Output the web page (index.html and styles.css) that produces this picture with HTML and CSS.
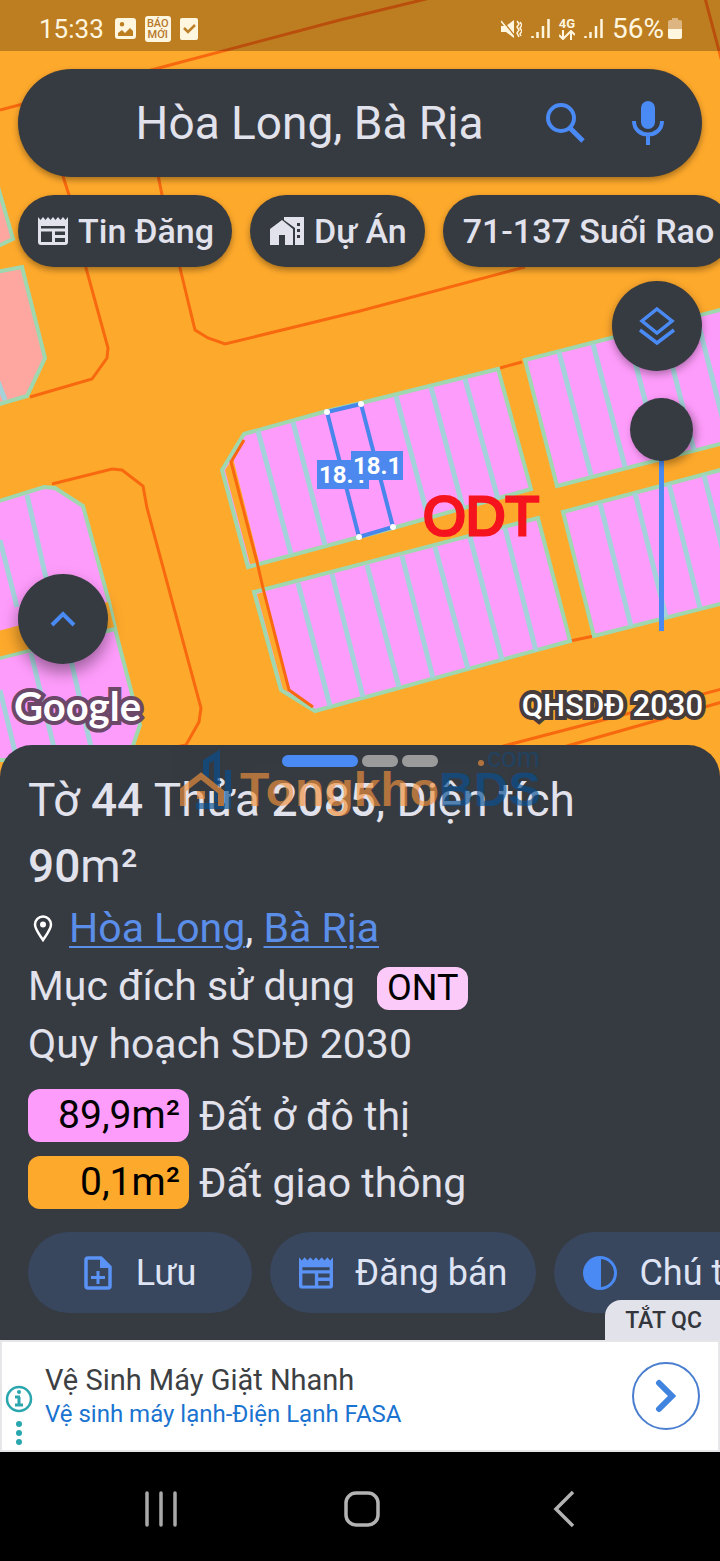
FILE: index.html
```html
<!DOCTYPE html>
<html lang="vi">
<head>
    <meta charset="UTF-8">
    <meta name="viewport" content="width=device-width, initial-scale=1.0">
    <title>Hòa Long, Bà Rịa</title>
    <link rel="stylesheet" href="styles.css">
</head>
<body>
    <main class="map">
        <svg class="map-canvas" viewBox="0 0 720 780" preserveAspectRatio="xMidYMin slice" aria-hidden="true">
            <rect width="720" height="780" fill="#fda92c"/>
            <!-- road edges -->
            <g class="road">
                <path d="M0 110L155 69L340 20L430 -2"/>
                <path d="M705 -2L722 62"/>
                <path d="M61 170L69 195L86 268L108 348L107 358L92 379L30 397"/>
                <path d="M157 170L162 195L180 268L195 330L208 338L225 344L360 311L525 267"/>
                <path d="M52 484L112 469L122 470L143 486L147 508L201 708L199 722L186 745L160 750"/>
                <path d="M500 368L522 362M570 641L594 636"/>
                <path d="M500 747L722 689M560 748L722 702"/>
            </g>
            <!-- blocks -->
            <g class="block salmon">
                <path d="M-4 180L13 239L-4 247Z"/>
                <path d="M-4 272L22 267L45 358L27 396L-4 405Z"/>
            </g>
            <g class="block">
                <path d="M-4 502L44 487L55 488L83 506L109 602L115 628L-4 656L-4 630Z"/>
                <path d="M-4 659L115 629L140 725L128 760L-4 760Z"/>
                <path d="M244 434L327 411L361 403L498 369L531 489L393 528L248 567L222 470Z"/>
                <path d="M254 592L538 518L570 641L315 711L281 690Z"/>
                <path d="M525 360L724 309V443L557 486Z"/>
                <path d="M563 512L724 469V603L594 636Z"/>
            </g>
            <path fill="#fda92c" d="M-2 631L108 602L114 627L-2 657Z"/>
            <path fill="#fda92c" d="M225 470L233 458L259 562L250 564Z"/>
            <path fill="#fda92c" d="M257 594L264 592L288 692L283 689Z"/>
            <!-- lot lines -->
            <g class="lots">
                <path d="M27 495L46 578M0 540L17 607M-2 382L5 400"/>
                <path d="M0 690L17 760M31 653L57 760M67 643L94 760"/>
                <path d="M258 431L291 554M293 422L325 545M396 396L428 517M431 387L463 508M465 379L498 499"/>
                <path d="M298 583L330 706M332 574L363 697M367 565L399 687M402 556L433 678M435 547L468 669M470 537L502 660M505 528L536 651"/>
                <path d="M559 352L591 475M593 344L625 467M628 335L660 458M662 326L694 450M697 318L728 440"/>
                <path d="M600 503L631 626M635 493L666 617M669 484L700 608M704 475L735 599"/>
            </g>
            <path class="edge" d="M244 440L231 462L257 562L263 588L289 690L313 707"/>
            <text class="zone" x="423" y="535">ODT</text>
            <!-- selected parcel -->
            <path d="M327 412L361 404L393 527L359 537Z" fill="none" stroke="#4886ec" stroke-width="4"/>
            <g fill="#fff">
                <circle cx="327" cy="412" r="3"/>
                <circle cx="361" cy="404" r="3"/>
                <circle cx="393" cy="527" r="3"/>
                <circle cx="359" cy="537" r="3"/>
            </g>
            <rect x="317" y="460" width="52" height="29" fill="#4c88ee"/>
            <text class="length" x="319" y="483">18.1</text>
            <rect x="351" y="451" width="52" height="29" fill="#4c88ee"/>
            <text class="length" x="353" y="474">18.1</text>
        </svg>

        <div class="map-ui">
            <div class="status-bar">
                <span class="clock">15:33</span>
                <svg width="21" height="21" viewBox="0 0 21 21"><path fill="#fff6e0" fill-rule="evenodd" d="M3 0H18Q21 0 21 3V18Q21 21 18 21H3Q0 21 0 18V3Q0 0 3 0ZM3 18H18V13L15 10L10 15L7 12L3 15ZM7 4A2.200 2.200 0 1 0 7 8.500A2.200 2.200 0 1 0 7 4Z"/></svg>
                <span class="news-badge">BÁO<br>MỚI</span>
                <svg width="18" height="22" viewBox="0 0 18 22"><rect width="18" height="22" rx="2" fill="#fff6e0"/><path d="M4 10L8 14L15 7" fill="none" stroke="#bd7f28" stroke-width="2.500"/></svg>
                <span class="status-space"></span>
                <svg width="21" height="20" viewBox="0 0 21 20"><path fill="#fff6e0" d="M0 7H5L13 1V19L5 13H0Z"/><path d="M1 1L13 16" stroke="#bd7f28" stroke-width="1.500"/><path d="M0 2L12 17M16 2L18 5L16 8L18 11L16 14L18 18M19 3L21 6L19 9L21 12L19 15L20 17" fill="none" stroke="#fff6e0" stroke-width="1.500"/></svg>
                <svg width="19" height="20" viewBox="0 0 19 20"><path d="M1.500 17V19M6.500 13V19M12 7V19M17.500 0V19" stroke="#fff6e0" stroke-width="2.500"/></svg>
                <span class="network">4G
                    <svg width="16" height="10" viewBox="0 0 16 10"><path d="M4 0V9M0 5L4 9L8 5M12 10V1M8 5L12 1L16 5" fill="none" stroke="#fff6e0" stroke-width="2"/></svg>
                </span>
                <svg width="19" height="20" viewBox="0 0 19 20"><path d="M1.500 17V19M6.500 13V19M12 7V19M17.500 0V19" stroke="#fff6e0" stroke-width="2.500"/></svg>
                <span class="battery">56%
                    <svg width="14" height="21" viewBox="0 0 14 21"><path fill="#dcb581" d="M4 0H10V2H12Q14 2 14 4V11H0V4Q0 2 2 2H4Z"/><path fill="#fff6e0" d="M0 11H14V19Q14 21 12 21H2Q0 21 0 19Z"/></svg>
                </span>
            </div>

            <form class="search">
                <input type="search" aria-label="Tìm kiếm" value="Hòa Long, Bà Rịa">
                <button type="button" aria-label="Tìm">
                    <svg width="42" height="42" viewBox="0 0 42 42" fill="none" stroke="#4a8af5" stroke-width="4"><circle cx="16" cy="16" r="13"/><path d="M25 26L38 39" stroke-width="5"/></svg>
                </button>
                <button type="button" aria-label="Giọng nói">
                    <svg width="34" height="44" viewBox="0 0 34 44"><rect x="10" y="0" width="14" height="28" rx="7" fill="#4a8af5"/><path d="M3 20C3 38 31 38 31 20M17 34V44" fill="none" stroke="#4a8af5" stroke-width="4"/></svg>
                </button>
            </form>

            <nav class="chips">
                <button type="button" class="chip">
                    <svg width="30" height="28" viewBox="0 0 30 28"><use href="#news"/></svg>Tin Đăng
                </button>
                <button type="button" class="chip">
                    <svg width="34" height="28" viewBox="0 0 34 28" fill="#e1e2ec"><path d="M0 12L12 3L23 12V28H15V18H9V28H0Z"/><path fill-rule="evenodd" d="M14 0H34V28H25V11L14 3ZM27 6V9H30V6ZM27 12V15H30V12ZM27 18V21H30V18Z"/></svg>Dự Án
                </button>
                <button type="button" class="chip">71-137 Suối Rao</button>
            </nav>

            <div class="tools">
                <button type="button" class="fab fab-up" aria-label="Mở rộng">
                    <svg width="26" height="16" viewBox="0 0 26 16"><path d="M2 14L13 3L24 14" fill="none" stroke="#4a8af5" stroke-width="4"/></svg>
                </button>
                <div class="tools-right">
                    <button type="button" class="fab" aria-label="Lớp bản đồ">
                        <svg width="38" height="40" viewBox="0 0 38 40" fill="none" stroke="#4a8af5" stroke-width="3.500"><path d="M19 3L34 15L19 27L4 15Z"/><path d="M2 24L19 37L36 24"/></svg>
                    </button>
                    <input type="range" class="opacity" aria-label="Độ mờ" min="0" max="100" value="0">
                </div>
            </div>

            <div class="map-labels">
                <span class="google">Google</span>
                <span class="plan">QHSDĐ 2030</span>
            </div>
        </div>
    </main>

    <section class="sheet">
        <svg class="watermark" width="370" height="66" viewBox="0 0 370 66" aria-hidden="true">
            <g fill="none" stroke="#085093" stroke-width="6">
                <path d="M26 28V12L37 5V52M48 20V56H16"/>
            </g>
            <path d="M3 56V40L21 26L41 42V56" fill="none" stroke="#f4933d" stroke-width="6"/>
            <rect x="17" y="41" width="8" height="8" fill="#f4933d"/>
            <text x="60" y="56" font-size="48" font-weight="700" fill="#f4933d">Tongkho<tspan fill="#085093">BDS</tspan></text>
            <circle cx="301" cy="13" r="3" fill="#f4933d"/>
            <text x="307" y="17" font-size="28" fill="#085093" opacity="0.6">com</text>
        </svg>
        <div class="pager"><span class="active"></span><span></span><span></span></div>
        <h1>Tờ <b>44</b> Thửa <b>2085</b>, Diện tích <b>90</b>m²</h1>
        <p class="place">
            <svg width="20" height="27" viewBox="0 0 20 27"><path d="M10 25C6 19 2 14 2 9.500A8 8 0 0 1 18 9.500C18 14 14 19 10 25Z" fill="none" stroke="#fff" stroke-width="2.500"/><circle cx="10" cy="9.500" r="3" fill="#fff"/></svg>
            <span><a href="#">Hòa Long</a>, <a href="#">Bà Rịa</a></span>
        </p>
        <p class="usage">Mục đích sử dụng <span class="tag">ONT</span></p>
        <p>Quy hoạch SDĐ 2030</p>
        <ul class="areas">
            <li><span class="area urban">89,9m²</span>Đất ở đô thị</li>
            <li><span class="area traffic">0,1m²</span>Đất giao thông</li>
        </ul>
        <div class="actions">
            <button type="button" class="action save">
                <svg width="28" height="34" viewBox="0 0 28 34"><path d="M4 2H17L26 11V30Q26 32 24 32H4Q2 32 2 30V4Q2 2 4 2Z" fill="none" stroke="#5a93f5" stroke-width="3.500"/><path d="M16 1L27 12H16Z" fill="#5a93f5"/><path d="M14 15V28M7 21.500H21" stroke="#5a93f5" stroke-width="3"/></svg>Lưu
            </button>
            <button type="button" class="action">
                <svg width="34" height="32" viewBox="0 0 30 28"><use href="#news"/></svg>Đăng bán
            </button>
            <button type="button" class="action">
                <svg width="34" height="34" viewBox="0 0 34 34"><circle cx="17" cy="17" r="15.500" fill="none" stroke="#4a8af5" stroke-width="3"/><path d="M18 1A16 16 0 0 0 18 33Z" fill="#4a8af5"/></svg>Chú thích
            </button>
        </div>
        <button type="button" class="close-ad">TẮT QC</button>
    </section>

    <aside class="ad">
        <svg width="28" height="60" viewBox="0 0 28 60"><circle cx="14" cy="14" r="12" fill="none" stroke="#2aa6ae" stroke-width="2.500"/><path d="M14 12V21M10 12H15M10 20H18" stroke="#2aa6ae" stroke-width="3"/><g fill="#2aa6ae"><circle cx="14" cy="7" r="2"/><circle cx="14" cy="39" r="3"/><circle cx="14" cy="48" r="3"/><circle cx="14" cy="57" r="3"/></g></svg>
        <div class="ad-text">
            <strong>Vệ Sinh Máy Giặt Nhanh</strong>
            <a href="#">Vệ sinh máy lạnh-Điện Lạnh FASA</a>
        </div>
        <button type="button" class="ad-go" aria-label="Mở">
            <svg width="22" height="34" viewBox="0 0 22 34"><path d="M4 4L17 17L4 30" fill="none" stroke="#4084e0" stroke-width="6" stroke-linecap="round"/></svg>
        </button>
    </aside>

    <nav class="system-nav">
        <button type="button" aria-label="Gần đây"><svg width="34" height="36" viewBox="0 0 34 36"><path d="M3 2V34M17 2V34M31 2V34" stroke="#a9a9a9" stroke-width="3.500" stroke-linecap="round"/></svg></button>
        <button type="button" aria-label="Trang chủ"><svg width="36" height="36" viewBox="0 0 36 36"><rect x="2" y="2" width="32" height="32" rx="10" fill="none" stroke="#b3b3b3" stroke-width="3.500"/></svg></button>
        <button type="button" aria-label="Quay lại"><svg width="22" height="38" viewBox="0 0 22 38"><path d="M20 2L3 19L20 36" fill="none" stroke="#b3b3b3" stroke-width="3.500"/></svg></button>
    </nav>

    <svg width="0" height="0" class="sprite" aria-hidden="true">
        <symbol id="news" viewBox="0 0 30 28">
            <path fill="currentColor" fill-rule="evenodd" d="M0 0L2.500 3L5 0L7.500 3L10 0L12.500 3L15 0L17.500 3L20 0L22.500 3L25 0L27.500 3L30 0V25Q30 28 27 28H3Q0 28 0 25ZM3 9V11.500H27V9ZM3 14.500V25H14V14.500ZM17 14.500V18H27V14.500ZM17 21V25H27V21Z"/>
        </symbol>
    </svg>
</body>
</html>
```
FILE: styles.css
```css
* {
    box-sizing: border-box;
}

body {
    margin: 0;
    background-color: #000;
    color: #e1e2ec;
    font-family: Roboto, sans-serif;
    overflow-x: hidden;
}

button, input {
    font-family: inherit;
    color: inherit;
}

button {
    display: flex;
    align-items: center;
    justify-content: center;
    padding: 0;
    border: none;
    background: none;
    cursor: pointer;
}

svg {
    flex: none;
}

.sprite {
    display: block;
}

/* map */
.map {
    position: relative;
    overflow: hidden;
    padding-bottom: 50px;
}

.map-canvas {
    position: absolute;
    inset: 0;
    width: 100%;
    height: 100%;
}

.road path, .edge {
    fill: none;
    stroke: #f8690f;
    stroke-width: 3;
}

.block path {
    fill: #fe9cfb;
    stroke: #9fd7ae;
    stroke-width: 4;
}

.salmon path {
    fill: #fda7a0;
}

.lots path {
    fill: none;
    stroke: #a4d2da;
    stroke-width: 5;
}

.zone {
    font-family: "Liberation Sans", Arial, sans-serif;
    font-size: 55px;
    fill: #f5141e;
    stroke: #f5141e;
    stroke-width: 3;
}

.length {
    font-size: 24px;
    font-weight: 700;
    fill: #fff;
}

.map-ui {
    position: relative;
}

.status-bar {
    display: flex;
    align-items: center;
    gap: 9px;
    height: 51px;
    padding: 6px 38px 0 39px;
    background-color: rgba(0, 0, 0, 0.25);
    color: #fff6e0;
    font-size: 26px;
}

.status-space {
    flex: 1;
}

.clock {
    margin-right: 2px;
}

.news-badge {
    width: 26px;
    height: 26px;
    padding-top: 2px;
    border-radius: 3px;
    background-color: #fff6e0;
    color: #b5782a;
    font-size: 11px;
    font-weight: 500;
    line-height: 11px;
    text-align: center;
}

.network {
    display: flex;
    flex-direction: column;
    align-items: center;
    font-size: 13px;
    font-weight: 700;
    line-height: 12px;
}

.battery {
    display: flex;
    align-items: center;
    gap: 4px;
    font-size: 28px;
}

.search {
    display: flex;
    align-items: center;
    height: 108px;
    margin: 18px 18px 0;
    padding-right: 32px;
    border-radius: 54px;
    background-color: #363a41;
    box-shadow: 0 3px 6px rgba(0, 0, 0, 0.35);
}

.search input {
    flex: 1;
    min-width: 0;
    padding: 0 0 0 82px;
    border: none;
    outline: none;
    background: none;
    font-size: 46px;
    text-align: center;
    appearance: none;
}

.search button {
    width: 44px;
    margin-left: 38px;
}

.search input + button {
    margin-left: 0;
}

.chips {
    display: flex;
    gap: 18px;
    padding: 18px 18px 0;
}

.chip {
    flex: none;
    gap: 10px;
    height: 72px;
    padding: 0 18px 0 20px;
    border-radius: 36px;
    background-color: #363a41;
    box-shadow: 0 3px 6px rgba(0, 0, 0, 0.35);
    font-size: 34px;
    font-weight: 500;
    white-space: nowrap;
}

.tools {
    display: flex;
    justify-content: space-between;
    align-items: flex-end;
    height: 383px;
    margin: 14px 18px 0;
}

.tools-right {
    display: flex;
    flex-direction: column;
    align-items: flex-end;
    align-self: flex-start;
    gap: 27px;
}

.fab {
    width: 90px;
    height: 90px;
    border-radius: 50%;
    background-color: #363a41;
    box-shadow: 0 3px 8px rgba(0, 0, 0, 0.35);
}

.fab-up {
    box-shadow: 0 8px 16px rgba(0, 0, 0, 0.4);
}

.opacity {
    writing-mode: vertical-lr;
    width: 63px;
    height: 233px;
    margin: 0 9px 0 0;
    background: none;
    appearance: none;
}

.opacity::-webkit-slider-runnable-track {
    width: 5px;
    background-color: #4a8af0;
}

.opacity::-webkit-slider-thumb {
    width: 63px;
    height: 63px;
    margin-left: -29px;
    border-radius: 50%;
    background-color: #363a41;
    box-shadow: 3px 3px 8px rgba(0, 0, 0, 0.35);
    appearance: none;
}

.map-labels {
    display: flex;
    justify-content: space-between;
    align-items: center;
    padding: 20px 17px 0 14px;
    color: #fff;
    line-height: 44px;
    -webkit-text-stroke: 8px #463c3c;
    paint-order: stroke fill;
}

.google {
    font-family: Lato, sans-serif;
    font-size: 40px;
    font-weight: 700;
    -webkit-text-stroke-color: #6b4768;
}

.plan {
    font-size: 31px;
    font-weight: 500;
}

/* parcel details */
.sheet {
    position: relative;
    margin-top: -33px;
    padding: 10px 28px 27px;
    border-radius: 32px 32px 0 0;
    background-color: #363a41;
    overflow: hidden;
}

.watermark {
    position: absolute;
    top: 5px;
    left: 180px;
    opacity: 0.65;
    font-family: "Liberation Sans", Arial, sans-serif;
}

.pager {
    display: flex;
    justify-content: center;
    gap: 4px;
}

.pager span {
    width: 36px;
    height: 12px;
    border-radius: 6px;
    background-color: #9b9b9c;
}

.pager .active {
    width: 76px;
    background-color: #4a8af5;
}

.sheet h1 {
    max-width: 640px;
    margin: 0;
    font-size: 46px;
    font-weight: 400;
    line-height: 66px;
}

.sheet h1 b {
    font-weight: 500;
}

.sheet p {
    margin: 0;
    font-size: 41px;
    line-height: 58px;
}

.sheet .place {
    display: flex;
    align-items: center;
    gap: 16px;
    padding-left: 5px;
}

.sheet .place a {
    color: #5a8ee8;
    text-decoration-thickness: 2px;
    text-underline-offset: 4px;
}

.sheet .usage {
    display: flex;
    align-items: center;
    gap: 22px;
}

.tag {
    margin-top: 4px;
    padding: 0 10px;
    border-radius: 12px;
    background-color: #fbcaf9;
    color: #000;
    font-size: 36px;
    line-height: 43px;
}

.areas {
    display: flex;
    flex-direction: column;
    gap: 14px;
    margin: 16px 0 0;
    padding: 0;
    list-style: none;
    font-size: 41px;
}

.areas li {
    display: flex;
    align-items: center;
    gap: 10px;
}

.area {
    width: 161px;
    padding-right: 9px;
    border-radius: 12px;
    color: #000;
    font-size: 39px;
    line-height: 53px;
    text-align: right;
}

.urban {
    background-color: #fe9cfb;
}

.traffic {
    background-color: #fda92c;
}

.actions {
    display: flex;
    gap: 18px;
    margin-top: 23px;
}

.action {
    flex: none;
    gap: 22px;
    height: 81px;
    padding: 0 29px;
    border-radius: 41px;
    background-color: #38465e;
    color: #dfe4f4;
    font-size: 36px;
    white-space: nowrap;
}

.save {
    gap: 24px;
    width: 224px;
}

.action use {
    color: #5a93f5;
}

.close-ad {
    position: absolute;
    right: 0;
    bottom: 0;
    height: 40px;
    padding: 0 18px 0 20px;
    border-radius: 16px 0 0 0;
    background-color: #e2e2ea;
    color: #33363c;
    font-size: 23px;
    font-weight: 500;
}

/* ad banner */
.ad {
    display: flex;
    align-items: center;
    height: 112px;
    padding: 0 18px 0 3px;
    border: 2px solid #e6e6e8;
    background-color: #fff;
}

.ad > svg {
    margin-top: 38px;
}

.ad-text {
    display: flex;
    flex: 1;
    flex-direction: column;
    margin-left: 12px;
}

.ad-text strong {
    color: #3c4043;
    font-size: 29px;
    font-weight: 400;
    line-height: 36px;
}

.ad-text a {
    color: #1a73d0;
    font-size: 24px;
    line-height: 32px;
    text-decoration: none;
}

.ad-go {
    width: 68px;
    height: 68px;
    border: 2px solid #4a7fd0;
    border-radius: 50%;
}

.system-nav {
    display: flex;
    justify-content: space-around;
    align-items: center;
    height: 109px;
    padding: 4px 55px 0 60px;
}

.system-nav button {
    width: 60px;
    height: 60px;
}
```
